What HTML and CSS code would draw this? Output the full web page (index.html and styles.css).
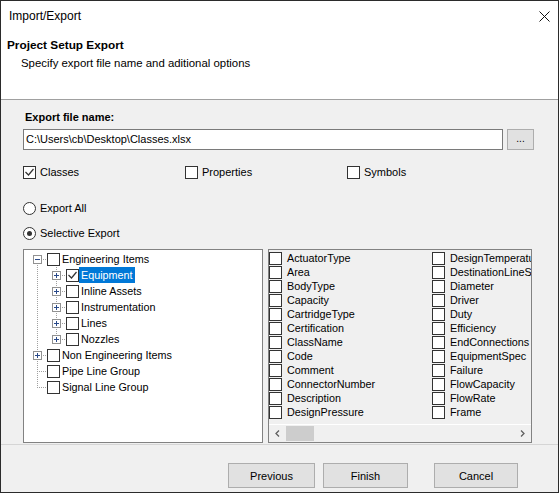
FILE: index.html
```html
<!DOCTYPE html>
<html>
<head>
<meta charset="utf-8">
<link rel="stylesheet" href="styles.css">
</head>
<body>
<div class="window">
  <div class="titlebar">
    <span class="title">Import/Export</span>
    <svg class="close" width="11" height="11" viewBox="0 0 11 11"><path d="M0.5 0.5L10.5 10.5M10.5 0.5L0.5 10.5" stroke="#111" stroke-width="1" fill="none"/></svg>
  </div>
  <div class="header">
    <div class="h-title">Project Setup Export</div>
    <div class="h-sub">Specify export file name and aditional options</div>
  </div>
  <div class="content">
    <div class="field-label">Export file name:</div>
    <div class="file-row">
      <div class="input">C:\Users\cb\Desktop\Classes.xlsx</div>
      <div class="browse">...</div>
    </div>
    <div class="opt-row">
      <div class="opt"><span class="cb"><svg width="11" height="11" viewBox="0 0 11 11"><polyline points="1.5,5 4.5,8 9.5,2" fill="none" stroke="#333" stroke-width="1.2"/></svg></span>Classes</div>
      <div class="opt"><span class="cb"></span>Properties</div>
      <div class="opt"><span class="cb"></span>Symbols</div>
    </div>
    <div class="radio-row first"><span class="radio"></span>Export All</div>
    <div class="radio-row"><span class="radio on"></span>Selective Export</div>
    <div class="panels">
      <div class="tree">
        <div class="trow"><span class="node h vb"><span class="exp"><svg width="7" height="7" viewBox="0 0 7 7"><path d="M1 3.5H6" stroke="#2a4a8a" stroke-width="1"/></svg></span></span><span class="cb"></span><span class="lbl">Engineering Items</span></div>
        <div class="trow"><span class="guide line"></span><span class="node h vt vb"><span class="exp"><svg width="7" height="7" viewBox="0 0 7 7"><path d="M1 3.5H6M3.5 1V6" stroke="#2a4a8a" stroke-width="1"/></svg></span></span><span class="cb"><svg width="11" height="11" viewBox="0 0 11 11"><polyline points="1.5,5 4.5,8 9.5,2" fill="none" stroke="#333" stroke-width="1.2"/></svg></span><span class="lbl sel">Equipment</span></div>
        <div class="trow"><span class="guide line"></span><span class="node h vt vb"><span class="exp"><svg width="7" height="7" viewBox="0 0 7 7"><path d="M1 3.5H6M3.5 1V6" stroke="#2a4a8a" stroke-width="1"/></svg></span></span><span class="cb"></span><span class="lbl">Inline Assets</span></div>
        <div class="trow"><span class="guide line"></span><span class="node h vt vb"><span class="exp"><svg width="7" height="7" viewBox="0 0 7 7"><path d="M1 3.5H6M3.5 1V6" stroke="#2a4a8a" stroke-width="1"/></svg></span></span><span class="cb"></span><span class="lbl">Instrumentation</span></div>
        <div class="trow"><span class="guide line"></span><span class="node h vt vb"><span class="exp"><svg width="7" height="7" viewBox="0 0 7 7"><path d="M1 3.5H6M3.5 1V6" stroke="#2a4a8a" stroke-width="1"/></svg></span></span><span class="cb"></span><span class="lbl">Lines</span></div>
        <div class="trow"><span class="guide line"></span><span class="node h vt"><span class="exp"><svg width="7" height="7" viewBox="0 0 7 7"><path d="M1 3.5H6M3.5 1V6" stroke="#2a4a8a" stroke-width="1"/></svg></span></span><span class="cb"></span><span class="lbl">Nozzles</span></div>
        <div class="trow"><span class="node h vt vb"><span class="exp"><svg width="7" height="7" viewBox="0 0 7 7"><path d="M1 3.5H6M3.5 1V6" stroke="#2a4a8a" stroke-width="1"/></svg></span></span><span class="cb"></span><span class="lbl">Non Engineering Items</span></div>
        <div class="trow"><span class="node h vt vb"></span><span class="cb"></span><span class="lbl">Pipe Line Group</span></div>
        <div class="trow"><span class="node h vt"></span><span class="cb"></span><span class="lbl">Signal Line Group</span></div>
      </div>
      <div class="list">
        <div class="list-body">
          <div class="li"><span class="cb"></span>ActuatorType</div>
          <div class="li"><span class="cb"></span>Area</div>
          <div class="li"><span class="cb"></span>BodyType</div>
          <div class="li"><span class="cb"></span>Capacity</div>
          <div class="li"><span class="cb"></span>CartridgeType</div>
          <div class="li"><span class="cb"></span>Certification</div>
          <div class="li"><span class="cb"></span>ClassName</div>
          <div class="li"><span class="cb"></span>Code</div>
          <div class="li"><span class="cb"></span>Comment</div>
          <div class="li"><span class="cb"></span>ConnectorNumber</div>
          <div class="li"><span class="cb"></span>Description</div>
          <div class="li"><span class="cb"></span>DesignPressure</div>
          <div class="li"><span class="cb"></span>DesignTemperature</div>
          <div class="li"><span class="cb"></span>DestinationLineSegment</div>
          <div class="li"><span class="cb"></span>Diameter</div>
          <div class="li"><span class="cb"></span>Driver</div>
          <div class="li"><span class="cb"></span>Duty</div>
          <div class="li"><span class="cb"></span>Efficiency</div>
          <div class="li"><span class="cb"></span>EndConnections</div>
          <div class="li"><span class="cb"></span>EquipmentSpec</div>
          <div class="li"><span class="cb"></span>Failure</div>
          <div class="li"><span class="cb"></span>FlowCapacity</div>
          <div class="li"><span class="cb"></span>FlowRate</div>
          <div class="li"><span class="cb"></span>Frame</div>
        </div>
        <div class="hscroll">
          <span class="arr"><svg width="17" height="17" viewBox="0 0 17 17"><polyline points="10,5.5 7,8.5 10,11.5" fill="none" stroke="#606060" stroke-width="1.3"/></svg></span>
          <span class="thumb"></span>
          <span class="track"></span>
          <span class="arr"><svg width="17" height="17" viewBox="0 0 17 17"><polyline points="7,5.5 10,8.5 7,11.5" fill="none" stroke="#606060" stroke-width="1.3"/></svg></span>
        </div>
      </div>
    </div>
  </div>
  <div class="footer">
    <div class="btn btn-prev">Previous</div>
    <div class="btn btn-finish">Finish</div>
    <div class="btn btn-cancel">Cancel</div>
  </div>
</div>
</body>
</html>
```

FILE: styles.css
```css
* { box-sizing: border-box; }
html, body { margin: 0; padding: 0; }
body {
  width: 559px;
  height: 493px;
  font-family: "Liberation Sans", Arial, sans-serif;
  font-size: 11px;
  color: #000;
  background: #fff;
}
.window {
  width: 559px;
  height: 493px;
  border: 1px solid #2b2b2b;
  display: flex;
  flex-direction: column;
  background: #f0f0f0;
  overflow: hidden;
}
.titlebar {
  height: 30px;
  flex: none;
  background: #fff;
  display: flex;
  align-items: center;
  justify-content: space-between;
  padding: 0 8px 0 8px;
  font-size: 12px;
}
.close { display: block; }
.header {
  height: 69px;
  flex: none;
  background: #fff;
  border-bottom: 1px solid #a0a0a0;
  padding: 6px 0 0 6px;
}
.h-title {
  font-weight: bold;
  font-size: 11.8px;
  line-height: 16px;
}
.h-sub {
  margin-top: 2px;
  line-height: 16px;
  padding-left: 14px;
  font-size: 11.4px;
}
.content {
  flex: none;
  padding: 9px 24px 1px 22px;
}
.field-label {
  font-weight: bold;
  line-height: 16px;
  height: 16px;
  padding-left: 2px;
}
.file-row {
  display: flex;
  margin-top: 4px;
  height: 21px;
}
.input {
  width: 480px;
  height: 21px;
  border: 1px solid #7a7a7a;
  background: #fff;
  padding-left: 2px;
  line-height: 19px;
  white-space: nowrap;
}
.browse {
  width: 27px;
  height: 21px;
  margin-left: 4px;
  border: 1px solid #adadad;
  background: #e1e1e1;
  text-align: center;
  line-height: 17px;
  font-size: 10px;
}
.opt-row {
  display: flex;
  margin-top: 16px;
  height: 13px;
}
.opt {
  width: 162px;
  display: flex;
  align-items: center;
  height: 13px;
  line-height: 13px;
}
.cb {
  width: 13px;
  height: 13px;
  flex: none;
  border: 1px solid #333;
  background: #fff;
  display: flex;
  align-items: center;
  justify-content: center;
}
.cb svg { display: block; }
.opt .cb { margin-right: 4px; }
.radio-row {
  display: flex;
  align-items: center;
  height: 13px;
  line-height: 13px;
  margin-top: 12px;
}
.radio-row.first { margin-top: 23px; }
.radio {
  width: 13px;
  height: 13px;
  border: 1px solid #333;
  border-radius: 50%;
  background: #fff;
  margin-right: 4px;
  display: flex;
  align-items: center;
  justify-content: center;
}
.radio.on::after {
  content: "";
  width: 5px;
  height: 5px;
  border-radius: 50%;
  background: #333;
}
.panels {
  display: flex;
  margin-top: 9px;
  height: 194px;
}
.tree {
  width: 240px;
  height: 194px;
  border: 1px solid #828282;
  background: #fff;
  padding-top: 1px;
  font-size: 10.8px;
}
.trow {
  display: flex;
  height: 16px;
  align-items: flex-start;
  white-space: nowrap;
}
.guide {
  width: 19px;
  height: 16px;
  flex: none;
}
.guide.line {
  background: repeating-linear-gradient(to bottom, #a0a0a0 0 1px, transparent 1px 2px) 13px 0 / 1px 16px no-repeat;
}
.node {
  --h: none;
  --vt: none;
  --vb: none;
  width: 23px;
  height: 16px;
  flex: none;
  padding: 4px 0 0 9px;
  background-image: var(--h), var(--vt), var(--vb);
  background-position: 13px 8px, 13px 0, 13px 8px;
  background-size: 10px 1px, 1px 8px, 1px 8px;
  background-repeat: no-repeat;
}
.node.h { --h: repeating-linear-gradient(to right, #a0a0a0 0 1px, transparent 1px 2px); }
.node.vt { --vt: repeating-linear-gradient(to bottom, #a0a0a0 0 1px, transparent 1px 2px); }
.node.vb { --vb: repeating-linear-gradient(to bottom, #a0a0a0 0 1px, transparent 1px 2px); }
.exp {
  width: 9px;
  height: 9px;
  border: 1px solid #919191;
  background: #fff;
  display: flex;
  align-items: center;
  justify-content: center;
}
.exp svg { display: block; shape-rendering: crispEdges; }
.trow .cb { margin-top: 2px; }
.lbl {
  height: 16px;
  line-height: 16px;
  padding: 0 2px;
}
.lbl.sel {
  background: #0078d7;
  color: #fff;
}
.list {
  width: 264px;
  height: 194px;
  margin-left: 5px;
  border: 1px solid #828282;
  background: #f0f0f0;
  display: flex;
  flex-direction: column;
  font-size: 10.8px;
}
.list-body {
  height: 174px;
  flex: none;
  display: grid;
  grid-auto-flow: column;
  grid-template-rows: repeat(12, 14px);
  grid-auto-columns: 163px;
  padding-top: 1px;
  overflow: hidden;
}
.li {
  display: flex;
  align-items: flex-start;
  height: 14px;
  line-height: 14px;
  white-space: nowrap;
}
.li .cb { margin-top: 1px; margin-right: 5px; }
.hscroll {
  height: 18px;
  flex: none;
  display: flex;
  border-top: 1px solid #fff;
  background: #f0f0f0;
}
.arr {
  width: 17px;
  height: 17px;
  flex: none;
}
.arr svg { display: block; }
.thumb {
  width: 28px;
  height: 15px;
  margin-top: 1px;
  background: #cdcdcd;
  flex: none;
}
.track { flex: 1; }
.footer {
  flex: 1;
  border-top: 1px solid #d5d5d5;
  padding: 18px 40px 0 0;
  display: flex;
  justify-content: flex-end;
  align-items: flex-start;
}
.btn {
  height: 25px;
  border: 1px solid #adadad;
  background: #e1e1e1;
  display: flex;
  align-items: center;
  justify-content: center;
}
.btn-prev { width: 87px; }
.btn-finish { width: 85px; margin-left: 8px; }
.btn-cancel { width: 84px; margin-left: 26px; }
```
